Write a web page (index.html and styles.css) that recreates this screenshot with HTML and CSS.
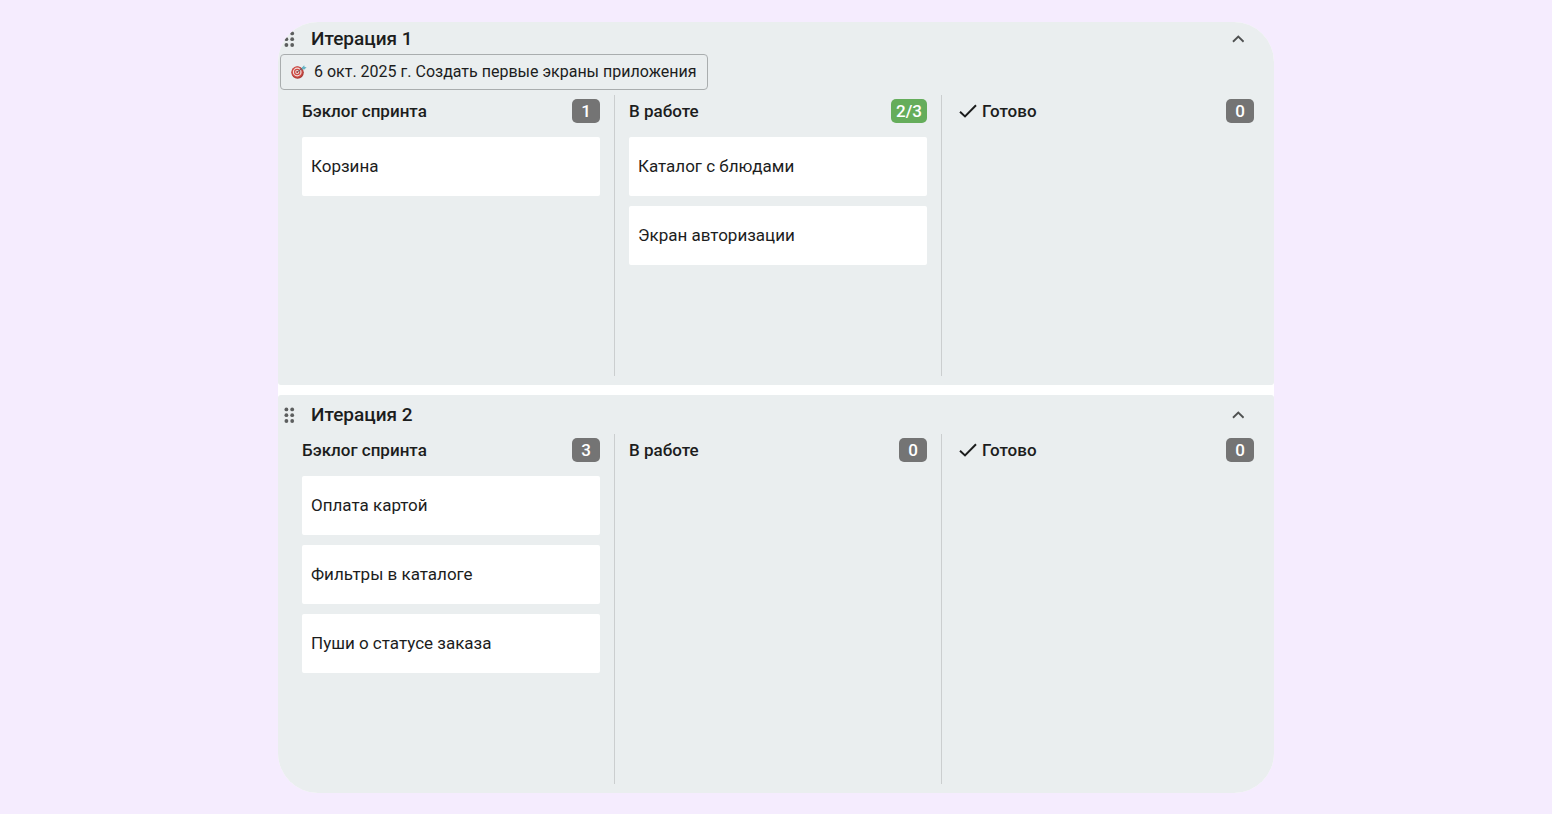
FILE: index.html
```html
<!DOCTYPE html>
<html lang="ru">
<head>
    <meta charset="utf-8">
    <title>Итерации</title>
    <link rel="stylesheet" href="styles.css">
</head>
<body>
<svg class="sprite" width="0" height="0" aria-hidden="true">
    <symbol id="drag" viewBox="0 0 12 16">
        <circle cx="3.4" cy="2.4" r="1.9"/><circle cx="9.2" cy="2.4" r="1.9"/>
        <circle cx="3.4" cy="8.2" r="1.9"/><circle cx="9.2" cy="8.2" r="1.9"/>
        <circle cx="3.4" cy="14" r="1.9"/><circle cx="9.2" cy="14" r="1.9"/>
    </symbol>
    <symbol id="chevron" viewBox="0 0 12 8">
        <path d="M1 6.7 6.3 1.5 11.6 6.7" fill="none" stroke="currentColor" stroke-width="1.9"/>
    </symbol>
    <symbol id="check" viewBox="0 0 18 14">
        <path d="M1 7.8 6 12.4 17 1.2" fill="none" stroke="currentColor" stroke-width="2"/>
    </symbol>
</svg>
<main class="board">
    <section class="iteration">
        <header class="iteration-header">
            <button class="drag" aria-label="Переместить"><svg width="12" height="16"><use href="#drag"/></svg></button>
            <h2>Итерация 1</h2>
            <button class="toggle" aria-label="Свернуть"><svg width="12" height="8"><use href="#chevron"/></svg></button>
        </header>
        <div class="goal">
            <svg class="target" width="16" height="14" viewBox="0 0 16 14" aria-hidden="true">
                <circle cx="6.6" cy="7.6" r="6.2" fill="#a63a36"/>
                <circle cx="6.2" cy="7" r="5.7" fill="#cf4a44"/>
                <circle cx="6.2" cy="7" r="4.4" fill="#f0dedb"/>
                <circle cx="6.2" cy="7" r="3.2" fill="#cf4a44"/>
                <circle cx="6.2" cy="7" r="2" fill="#f0dedb"/>
                <circle cx="6.2" cy="7" r="1" fill="#b8322f"/>
                <path d="M6.5 6.8 12.5 2.5" stroke="#4d6068" stroke-width="1"/>
                <path d="M10.7 2.8 13.2 0.3 13.6 2 15.6 2.2 13.4 4.5 11 4.3z" fill="#67b4c4"/>
            </svg>
            <span>6 окт. 2025 г. Создать первые экраны приложения</span>
        </div>
        <div class="columns">
            <div class="column">
                <div class="column-header"><h3>Бэклог спринта</h3><span class="count">1</span></div>
                <article class="card">Корзина</article>
            </div>
            <div class="column">
                <div class="column-header"><h3>В работе</h3><span class="count limit">2/3</span></div>
                <article class="card">Каталог с блюдами</article>
                <article class="card">Экран авторизации</article>
            </div>
            <div class="column">
                <div class="column-header"><svg class="check" width="18" height="14"><use href="#check"/></svg><h3>Готово</h3><span class="count">0</span></div>
            </div>
        </div>
    </section>
    <section class="iteration next">
        <header class="iteration-header">
            <button class="drag" aria-label="Переместить"><svg width="12" height="16"><use href="#drag"/></svg></button>
            <h2>Итерация 2</h2>
            <button class="toggle" aria-label="Свернуть"><svg width="12" height="8"><use href="#chevron"/></svg></button>
        </header>
        <div class="columns tall">
            <div class="column">
                <div class="column-header"><h3>Бэклог спринта</h3><span class="count">3</span></div>
                <article class="card">Оплата картой</article>
                <article class="card">Фильтры в каталоге</article>
                <article class="card">Пуши о статусе заказа</article>
            </div>
            <div class="column">
                <div class="column-header"><h3>В работе</h3><span class="count">0</span></div>
            </div>
            <div class="column">
                <div class="column-header"><svg class="check" width="18" height="14"><use href="#check"/></svg><h3>Готово</h3><span class="count">0</span></div>
            </div>
        </div>
    </section>
</main>
</body>
</html>
```
FILE: styles.css
```css
* {
    box-sizing: border-box;
}
body {
    margin: 0;
    padding: 22px 278px 20px;
    background: #f5ecfe;
    color: #1c1d1d;
    font-family: Roboto, "Liberation Sans", sans-serif;
    font-size: 17px;
    line-height: 24px;
}
h2, h3 {
    margin: 0;
    font-weight: 500;
}
h2 {
    font-size: 19px;
}
h3 {
    font-size: 17px;
}
button {
    display: flex;
    align-items: center;
    justify-content: center;
    padding: 0;
    border: 0;
    background: none;
    cursor: pointer;
}
.sprite {
    position: absolute;
}
.board {
    display: flex;
    flex-direction: column;
    gap: 10px;
    overflow: hidden;
    border-radius: 40px;
    background: #fff;
}
.iteration {
    padding-bottom: 9px;
    border-radius: 3px;
    background: #eaeeef;
}
.next {
    padding-top: 3px;
}
.iteration-header {
    display: flex;
    align-items: center;
    height: 32px;
    padding: 2px 24px 0 5px;
}
.drag {
    width: 12px;
    height: 24px;
    fill: #5c5e5e;
    cursor: grab;
}
.iteration-header h2 {
    flex: 1;
    margin-left: 16px;
}
.toggle {
    width: 24px;
    height: 24px;
    color: #4f5151;
}
.goal {
    display: flex;
    align-items: center;
    gap: 7px;
    width: fit-content;
    height: 36px;
    margin-left: 2px;
    padding: 0 10px;
    border: 1px solid #a9adae;
    border-radius: 4px;
    font-size: 16px;
}
.columns {
    display: grid;
    grid-template-columns: repeat(3, 1fr);
    min-height: 281px;
    margin-top: 5px;
    padding: 0 5px 0 10px;
}
.tall {
    min-height: 350px;
}
.next .columns {
    margin-top: 4px;
}
.column {
    display: flex;
    flex-direction: column;
    gap: 10px;
    padding: 0 14px;
    border-right: 1px solid #cbcecf;
}
.column:last-child {
    border-right-color: transparent;
}
.column-header {
    display: flex;
    align-items: center;
    height: 32px;
}
.check {
    margin: 0 5px 0 3px;
}
.count {
    min-width: 28px;
    margin-left: auto;
    padding: 0 5px;
    border-radius: 5px;
    background: #747474;
    color: #fff;
    font-weight: 500;
    text-align: center;
}
.limit {
    background: #65ad5b;
}
.card {
    height: 59px;
    padding: 17px 9px 18px;
    border-radius: 2px;
    background: #fff;
}
```
